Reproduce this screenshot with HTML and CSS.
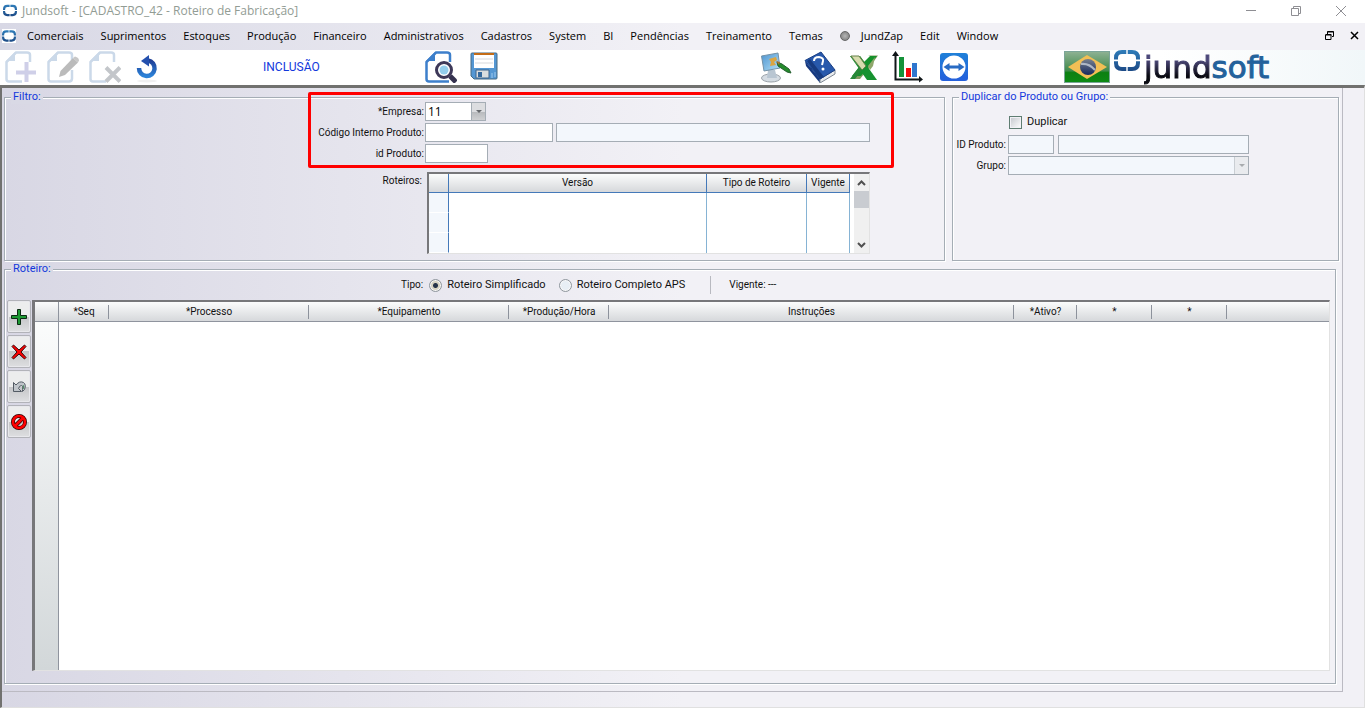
FILE: index.html
```
<!DOCTYPE html>
<html lang="pt-BR">
<head>
<meta charset="utf-8">
<meta name="viewport" content="width=device-width, initial-scale=1">
<title>Jundsoft - [CADASTRO_42 - Roteiro de Fabricação]</title>
<link rel="stylesheet" href="styles.css">
</head>
<body>
<svg class="defs" aria-hidden="true">
  <defs>
    <linearGradient id="ring" x1="0" y1="0" x2="0" y2="21" gradientUnits="userSpaceOnUse"><stop offset="0" stop-color="#2f7dba"/><stop offset="1" stop-color="#1c4a86"/></linearGradient>
    <linearGradient id="undoBlue" x1="0" y1="0" x2="0" y2="1"><stop offset="0" stop-color="#1f3f96"/><stop offset="1" stop-color="#2c82d8"/></linearGradient>
    <linearGradient id="flagGreen" x1="0" y1="0" x2="0" y2="1"><stop offset="0" stop-color="#8fb294"/><stop offset=".62" stop-color="#3f8a4a"/><stop offset=".68" stop-color="#0c8012"/><stop offset="1" stop-color="#0d8a14"/></linearGradient>
    <linearGradient id="flagBlue" x1="0" y1="0" x2="0" y2="1"><stop offset="0" stop-color="#76808e"/><stop offset="1" stop-color="#15285e"/></linearGradient>
    <linearGradient id="tv" x1="0" y1="0" x2="0" y2="1"><stop offset="0" stop-color="#1f80d8"/><stop offset="1" stop-color="#2560dc"/></linearGradient>
    <linearGradient id="screen" x1="0" y1="0" x2="1" y2="1"><stop offset="0" stop-color="#4d93cf"/><stop offset="1" stop-color="#b5e2f8"/></linearGradient>
    <symbol id="brand-mark" viewBox="0 0 26 21">
      <g fill="none" stroke="url(#ring)" stroke-width="4">
        <path d="M12.300 2H8Q2 2 2 8v1.500"/><path d="M13.700 2H18Q24 2 24 8v1.500"/>
        <path d="M2 11.200V13Q2 19 8 19h4.300"/><path d="M24 11.200V13Q24 19 18 19h-4.300"/>
      </g>
    </symbol>
    <symbol id="doc" viewBox="0 0 32 32">
      <path d="M25 11V4Q25 1.500 22 1.500H11L1.500 11V28Q1.500 30.500 4 30.500H17" fill="none" stroke="currentColor" stroke-width="2.500"/>
      <path d="M10 1L1 10H10Z" fill="currentColor"/>
    </symbol>
  </defs>
</svg>

<header class="title-bar">
  <svg class="app-icon"><use href="#brand-mark"/></svg>
  <h1 class="title">Jundsoft - [CADASTRO_42 - Roteiro de Fabricação]</h1>
  <div class="window-buttons">
    <button aria-label="Minimizar"><svg viewBox="0 0 12 12"><path d="M1 5.500h10"/></svg></button>
    <button aria-label="Restaurar"><svg viewBox="0 0 12 12"><path d="M1.500 3.500h7v7h-7zM3.500 3v-1.500h7v7H9"/></svg></button>
    <button aria-label="Fechar"><svg viewBox="0 0 12 12"><path d="M1 1l10 10M11 1L1 11"/></svg></button>
  </div>
</header>

<nav class="menu-bar">
  <svg class="app-icon app-icon-boxed"><use href="#brand-mark"/></svg>
  <div class="menu">
    <button>Comerciais</button><button>Suprimentos</button><button>Estoques</button><button>Produção</button><button>Financeiro</button><button>Administrativos</button><button>Cadastros</button><button>System</button><button>BI</button><button>Pendências</button><button>Treinamento</button><button>Temas</button><button class="with-dot"><span class="dot"></span>JundZap</button><button>Edit</button><button>Window</button>
  </div>
  <div class="child-buttons">
    <button aria-label="Restaurar janela"><svg viewBox="0 0 9 9"><path d="M1 3.500h5v5H.5v-5M.5 4h6M2.500 3V.5h6v5H7M2.500 1h6"/></svg></button>
    <button aria-label="Fechar janela"><svg viewBox="0 0 9 9"><path d="M1 1l7 7M8 1L1 8" stroke-width="1.500"/></svg></button>
  </div>
</nav>

<div class="toolbar">
  <div class="tools tools-record">
    <button aria-label="Incluir" disabled><svg class="icon pale"><use href="#doc"/><path d="M21.500 11v20M11 21.500h20" stroke="#cfcfe8" stroke-width="4"/></svg></button>
    <button aria-label="Alterar" disabled><svg class="icon pale"><use href="#doc"/><path d="M17 30.500h5q3 0 3-3V19" fill="none" stroke="currentColor" stroke-width="2.500"/><path d="M12 26l1.500-6L26 7l5 4.500L18 24z" fill="#bbb"/><path d="M26 7l2-1.500q4 1 4 4l-1 2z" fill="#c7c7c7"/></svg></button>
    <button aria-label="Excluir" disabled><svg class="icon pale"><use href="#doc"/><path d="M17 16.500l14 14M31 16.500l-14 14" stroke="#c3c6ca" stroke-width="4"/></svg></button>
    <button aria-label="Desfazer"><svg class="icon" viewBox="0 0 32 32"><ellipse cx="16" cy="30" rx="10" ry="1.500" fill="#f0f0f0"/><path d="M17 9.500a7.800 7.800 0 1 1-9 7.500" fill="none" stroke="url(#undoBlue)" stroke-width="4.500"/><path d="M18 4v11.500L10 10z" fill="#2450ae"/></svg></button>
    <span class="mode">INCLUSÃO</span>
  </div>
  <div class="tools">
    <button aria-label="Pesquisar"><svg class="icon doc-blue"><use href="#doc"/><path d="M17 30.500h7" stroke="currentColor" stroke-width="2.500"/><path d="M25 25l6 6" stroke="#35324f" stroke-width="5"/><circle cx="19" cy="19" r="7.500" fill="#fff" stroke="#3d3858" stroke-width="3"/><circle cx="19" cy="19" r="4.500" fill="#93cdec"/></svg></button>
    <button aria-label="Salvar"><svg class="icon"><path d="M4 3q0-1 1-1h24q1 0 1 1v24q0 1-1 1H7l-3-3z" fill="#5597d3" stroke="#466b84"/><path d="M7 2h20v15H7z" fill="#fff"/><path d="M7 2h20v2H7z" fill="#c46c16"/><path d="M8 8h18M8 12h18" stroke="#d7d9dc"/><path d="M9 19h13v8H9z" fill="#d9dddf" stroke="#3d648d"/><path d="M11 21h4v5h-4z" fill="#34699e"/><path d="M25 22v5M28 21v5" stroke="#a1cbed"/></svg></button>
  </div>
  <div class="tools tools-apps">
    <button aria-label="Temas"><svg class="icon"><ellipse cx="11" cy="27" rx="9.500" ry="4" fill="#d5dce3" stroke="#9aa1a8"/><path d="M8 19h7l2 8H7z" fill="#b9c6d2"/><path d="M1.500 5L18 2l2 15L4 20z" fill="url(#screen)" stroke="#7391a7"/><path d="M9 8l7-2 1 3-3 2 2 3-6 1 1-4z" fill="#dba541"/><path d="M17 11l5 2 7 5 2 4-4-1-9-6z" fill="#248b2b" stroke="#255e30"/><path d="M16 10l4 1-1 3z" fill="#ab712c"/></svg></button>
    <button aria-label="Ajuda"><svg class="icon"><path d="M1 10L16 28v4L2 15z" fill="#16387f"/><path d="M16 28l15-9v4l-15 9z" fill="#e8eaed" stroke="#7d8792"/><path d="M1 9.500L17 1l14 18-15 9z" fill="#2859ac" stroke="#183e85"/><path d="M3 10l3-2 14 18-4 2z" fill="#173b80"/><path d="M10 10q0-4 5-4 5 1 4 4l-1 4" fill="none" stroke="#fff" stroke-width="2"/><circle cx="19" cy="18" r="1.500" fill="#fff"/></svg></button>
    <button aria-label="Excel"><svg class="icon"><path d="M2 5h10l7 9 7-9h-6l2-.5h8L21 17l-9 11H4l9-12z" fill="#849c62"/><path d="M22 5h7l-9 11-7 9H4l8-10 4-4z" fill="#15912b"/><path d="M2 5h10l17 24H19z" fill="#169230"/><path d="M3 5h8l7 10-4 4z" fill="#d8dcae" stroke="#67814b"/><path d="M20 15l7-9-2 9-3 4z" fill="#8fa76b"/><path d="M2 28h5l7-9-3-3z" fill="#278737"/></svg></button>
    <button aria-label="Gráficos"><svg class="icon"><path d="M7 6h5v20H7z" fill="#149239"/><path d="M14 17h5v9h-5z" fill="#f40b0b"/><path d="M20 12h5v14h-5z" fill="#2f76ce"/><path d="M3.500 3v25.500H28" fill="none" stroke="#101619" stroke-width="2"/><path d="M0 5l3.500-5L7 5zM27 25l4 3.500-4 3z" fill="#101619"/></svg></button>
    <button aria-label="Acesso remoto"><svg class="icon"><rect x="4" y="2" width="28" height="28" rx="3" fill="url(#tv)"/><circle cx="18" cy="16" r="11.500" fill="#fff"/><path d="M7.500 16l6-4v2.500h9v-2.500l6 4-6 4v-2.500h-9v2.500z" fill="#286bc4"/></svg></button>
  </div>
  <div class="brand">
    <svg class="flag" viewBox="0 0 46 32"><rect x=".5" y=".5" width="45" height="31" fill="url(#flagGreen)" stroke="#7ba598"/><path d="M4 16L23 4l20 12-20 12z" fill="#f1bf55"/><circle cx="24" cy="16" r="8" fill="url(#flagBlue)"/><path d="M17 13q8-1 14 6" fill="none" stroke="#aeb7c5" stroke-width="2"/></svg>
    <svg class="brand-ring"><use href="#brand-mark"/></svg>
    <span class="wordmark"><span class="word-dark">jund</span><span class="word-blue">soft</span></span>
  </div>
</div>

<main class="workspace">
  <form class="sheet">
    <div class="top-groups">
      <fieldset class="group">
        <legend>Filtro:</legend>
        <div class="filter">
          <label for="empresa">*Empresa:</label>
          <span class="combo combo-small"><select id="empresa"><option>11</option></select><span class="arrow"></span></span>
          <label for="codigo">Código Interno Produto:</label>
          <span class="pair"><input class="code" id="codigo" type="text"><input class="wide" type="text" aria-label="Descrição do produto" disabled></span>
          <label for="id-produto">id Produto:</label>
          <span class="pair"><input class="id" id="id-produto" type="text"></span>
        </div>
        <div class="versions">
          <span class="versions-label" id="roteiros">Roteiros:</span>
          <div class="list">
            <table class="list-table" aria-labelledby="roteiros">
              <colgroup><col class="w-mark"><col><col class="w-type"><col class="w-current"></colgroup>
              <thead><tr><th></th><th>Versão</th><th>Tipo de Roteiro</th><th>Vigente</th></tr></thead>
              <tbody><tr><td></td><td></td><td></td><td></td></tr><tr><td></td><td></td><td></td><td></td></tr><tr><td></td><td></td><td></td><td></td></tr></tbody>
            </table>
            <div class="scroll">
              <svg viewBox="0 0 9 6"><path d="M1 5l3.500-3.500L8 5"/></svg>
              <span class="thumb"></span>
              <svg viewBox="0 0 9 6"><path d="M1 1l3.500 3.500L8 1"/></svg>
            </div>
          </div>
        </div>
        <div class="highlight"></div>
      </fieldset>

      <fieldset class="group">
        <legend class="light">Duplicar do Produto ou Grupo:</legend>
        <div class="duplicate">
          <label class="check"><input type="checkbox">Duplicar</label>
          <label for="dup-id">ID Produto:</label>
          <span class="pair pair-dup"><input id="dup-id" type="text" disabled><input type="text" aria-label="Produto" disabled></span>
          <label for="grupo">Grupo:</label>
          <span class="combo combo-off"><select id="grupo" disabled><option></option></select><span class="arrow"></span></span>
        </div>
      </fieldset>
    </div>

    <fieldset class="group route">
      <legend>Roteiro:</legend>
      <div class="route-body">
        <div class="route-options">
          <span>Tipo:</span>
          <label><input type="radio" name="tipo" checked>Roteiro Simplificado</label>
          <label><input type="radio" name="tipo">Roteiro Completo APS</label>
          <span class="current">Vigente: ---</span>
        </div>
        <div class="route-grid">
          <div class="side">
            <button type="button" aria-label="Adicionar"><svg viewBox="0 0 16 16"><path d="M6.500.5h3v6h6v3h-6v6h-3v-6h-6v-3h6z" fill="#1c9a33" stroke="#0b2b12"/></svg></button>
            <button type="button" aria-label="Remover"><svg viewBox="0 0 16 16"><path d="M2.500 1L8 6l5.500-5L15 2.500 10 8l5 5.500-1.500 1.500L8 10l-5.500 5L1 13.500 6 8 1 2.500z" fill="#f00" stroke="#34090a"/></svg></button>
            <button type="button" aria-label="Desfazer linha"><svg viewBox="0 0 16 16"><path d="M2.500 3.500v9h8l-3-3q1-3 3-3 2 1 1 4v2l2-2q2-5-1-7-4-2-7.500 2.500z" fill="#c0c5ca" stroke="#535b64"/><path d="M12 6q1.500 2 0 4" fill="none" stroke="#4b8a60"/></svg></button>
            <button type="button" aria-label="Cancelar"><svg viewBox="0 0 16 16"><circle cx="8" cy="8" r="6" fill="none" stroke="#300" stroke-width="4"/><path d="M4 12l8-8" stroke="#300" stroke-width="4"/><circle cx="8" cy="8" r="6" fill="none" stroke="#f00" stroke-width="2.500"/><path d="M4 12l8-8" stroke="#f00" stroke-width="2.500"/></svg></button>
          </div>
          <div class="steps">
            <table class="steps-table">
              <colgroup><col class="c-mark"><col class="c-seq"><col class="c-proc"><col class="c-proc"><col class="c-hour"><col class="c-instr"><col class="c-active"><col class="c-star"><col class="c-star"><col></colgroup>
              <thead><tr><th></th><th>*Seq</th><th>*Processo</th><th>*Equipamento</th><th>*Produção/Hora</th><th>Instruções</th><th>*Ativo?</th><th>*</th><th>*</th><th></th></tr></thead>
            </table>
            <div class="steps-empty"></div>
          </div>
        </div>
      </div>
    </fieldset>
  </form>
</main>
</body>
</html>
```
FILE: styles.css
```
* { box-sizing: border-box; }

body {
  margin: 0;
  min-height: 100vh;
  display: flex;
  flex-direction: column;
  background: #fff;
  color: #111;
  font: 10px/14px Roboto, "Liberation Sans", Arial, sans-serif;
}

button { font: inherit; color: inherit; border: 0; padding: 0; background: none; }
svg { display: block; }
.defs { position: absolute; width: 0; height: 0; }

/* Title bar */
.title-bar { display: flex; align-items: center; height: 23px; padding: 0 18px 2px 3px; }
.app-icon { width: 14px; height: 13px; flex: none; }
.title { flex: 1; margin: 0 0 0 5px; font: 400 12px/16px "Open Sans", "Noto Sans", sans-serif; color: #929c94; }
.window-buttons { display: flex; gap: 33px; }
.window-buttons svg { width: 12px; height: 12px; fill: none; stroke: #8e8e93; }

/* Menu bar */
.menu-bar { display: flex; align-items: center; height: 27px; padding: 0 6px 2px 2px; background: linear-gradient(90deg, #d8d8e5, #f2f1f6 50%); }
.app-icon-boxed { height: 14px; background: #fff; }
.menu { display: flex; flex: 1; gap: 17px; margin-left: 11px; font: 11px/16px "Open Sans", "Noto Sans", sans-serif; color: #000; }
.with-dot { display: flex; align-items: center; gap: 11px; }
.dot { width: 10px; height: 10px; border: 1px solid #666; border-radius: 50%; background: radial-gradient(#b5b5b5, #777); }
.child-buttons { display: flex; gap: 16px; }
.child-buttons svg { width: 9px; height: 9px; fill: none; stroke: #000; }

/* Toolbar */
.toolbar { display: grid; grid-template-columns: 425fr 335fr 304fr 301fr; height: 35px; align-items: start; background: linear-gradient(90deg, #fff 85%, #f1f7f9); }
.tools { display: flex; gap: 10px; padding-top: 1px; }
.tools-record { padding-left: 5px; }
.icon { width: 32px; height: 32px; }
.pale { color: #cbd9e9; }
.doc-blue { color: #3d7fcb; }
.mode { margin: 8px 0 0 90px; font: 12px/16px Roboto, "Liberation Sans", sans-serif; color: #1238dc; }
.tools-apps { gap: 12px; }
.brand { display: flex; gap: 4px; }
.flag { width: 46px; height: 32px; margin-top: 1px; }
.brand-ring { width: 26px; height: 21px; }
.wordmark { font: 31px/34px "DejaVu Sans", sans-serif; -webkit-text-stroke-width: 1px; }
.word-dark { color: transparent; background: linear-gradient(#4b4779 30%, #080810 75%); background-clip: text; }
.word-blue { color: #23619b; }

/* Workspace */
.workspace {
  flex: 1;
  display: flex;
  padding: 0 21px 15px 0;
  border: solid #71716f;
  border-width: 3px 1px 1px 2px;
  border-right-color: #e0e0e0;
  border-bottom-color: #e0e0e0;
  background: linear-gradient(90deg, #d8d7e4, #f2f1f6 50%);
}
.sheet { flex: 1; display: flex; flex-direction: column; padding: 2px 3px 7px 2px; border: solid #bbbac2; border-width: 0 1px 1px 0; }
.top-groups { display: grid; grid-template-columns: 941fr 387fr; gap: 7px; }
.group { position: relative; min-width: 0; margin: 0; padding: 0; border: 1px solid #a5adb5; box-shadow: 1px 1px 0 #fff, inset 1px 1px 0 #fff; }
legend { margin-left: 6px; padding: 0 2px; font: 11px/14px Roboto, "Liberation Sans", sans-serif; color: #1238dc; background: #d9d9e5; }
legend.light { background: #f2f1f6; }

input, select { font: 12px/16px "Open Sans", sans-serif; color: #000; }
input[type="text"], select { height: 19px; min-width: 0; margin: 0; padding: 0 2px; border: 1px solid #a5adb5; border-radius: 0; background: #fff; }
input[type="text"]:disabled, select:disabled { background: #f3f7fc; opacity: 1; }
select { width: 100%; display: block; appearance: none; }
.combo { position: relative; }
.combo-small { width: 61px; }
.arrow { position: absolute; top: 1px; right: 1px; bottom: 1px; width: 14px; display: grid; place-items: center; border-left: 1px solid #a5adb5; background: linear-gradient(#dcdde0 50%, #b6b8bb 50%, #cfd0d2); pointer-events: none; }
.arrow::after { content: ""; border: solid transparent; border-width: 3px 3px 0; border-top-color: #66696d; }
.combo-off .arrow { background: #e9ebee; border-color: #c9ced3; }
.combo-off .arrow::after { border-top-color: #a8abae; }

.filter { display: grid; grid-template-columns: 419px 1fr; column-gap: 1px; row-gap: 2px; margin-top: -2px; align-items: center; }
.filter > label, .duplicate > label { text-align: right; white-space: nowrap; }
.pair { display: flex; gap: 3px; }
.code { width: 128px; }
.wide { flex: 0 1 314px; }
.id { width: 63px; }

.versions { display: grid; grid-template-columns: 417px 443px; gap: 5px; margin: 9px 0 6px; }
.versions-label { text-align: right; padding-top: 2px; }
.list { display: flex; border: solid #77777a; border-width: 2px 1px 1px 2px; border-right-color: #e2e2e2; border-bottom-color: #e2e2e2; background: #fff; }
table { border-collapse: separate; border-spacing: 0; table-layout: fixed; }
th { padding: 0; font-weight: 400; }
.list-table { flex: 1; width: 0; margin-right: 4px; }
.w-mark { width: 20px; }
.w-type { width: 100px; }
.w-current { width: 43px; }
.list-table th { height: 19px; border: solid #4479b9; border-width: 0 1px 1px 0; background: linear-gradient(#fbfcfc, #d6d8db); }
.list-table td { height: 20px; padding: 0; border-right: 1px solid #86b3d4; }
.list-table td:first-child { background: #f3f7fc; border-right-color: #4479b9; border-bottom: 1px solid #fff; }
.scroll { width: 15px; display: flex; flex-direction: column; align-items: center; padding: 6px 0 5px; background: #f0f0f0; }
.scroll svg { width: 9px; height: 6px; fill: none; stroke: #505050; stroke-width: 2; }
.thumb { width: 15px; height: 17px; margin: 5px 0 auto; background: #c9ccd1; }
.highlight { position: absolute; left: 303px; right: 50px; top: -12px; height: 76px; border: 3px solid #f00; border-radius: 2px; pointer-events: none; }

.duplicate { display: grid; grid-template-columns: 53px minmax(0, 241px); column-gap: 2px; row-gap: 2px; padding-top: 9px; align-items: center; }
.duplicate .check { grid-column: 2; display: flex; align-items: center; gap: 5px; height: 18px; margin-bottom: 2px; text-align: left; font-size: 11px; }
.check input { appearance: none; width: 13px; height: 13px; margin: 0 0 0 1px; border: 1px solid #5f7d72; background: linear-gradient(135deg, #c3c6cc, #fff); box-shadow: inset 0 0 0 1px #f2f1f6; }
.pair-dup { display: grid; grid-template-columns: 46px 1fr; gap: 4px; }

/* Route steps */
.route { flex: 1; display: flex; margin: 1px 3px 0 0; }
.route-body { flex: 1; display: flex; flex-direction: column; }
.route-options { display: flex; align-items: center; padding-left: 396px; height: 18px; }
.route-options label { display: flex; align-items: center; gap: 5px; margin-left: 6px; font-size: 11px; }
.route-options label + label { margin-left: 13px; }
.route-options input { appearance: none; width: 13px; height: 13px; margin: 0; border: 1px solid #8f969d; border-radius: 50%; background: #e8eff5; box-shadow: inset 0 0 0 1px #f8f8f8; }
.route-options input:checked { background: radial-gradient(#273449 0 2px, #d8d3c0 3px); }
.current { margin-left: 25px; padding-left: 18px; line-height: 18px; border-left: 1px solid #b8b9c0; }
.route-grid { flex: 1; display: flex; gap: 1px; padding: 6px 5px 12px 2px; }
.side { display: flex; flex-direction: column; gap: 2px; }
.side button { display: grid; place-items: center; width: 24px; height: 33px; border: 1px solid #b2b3b9; border-radius: 2px; box-shadow: inset 0 0 0 1px #e8e8ec; background: linear-gradient(#eceded 50%, #c4c5c7 50%, #dedfe1); }
.side svg { width: 16px; height: 16px; }
.steps { flex: 1; min-width: 0; display: flex; flex-direction: column; border: solid #77777a; border-width: 2px 1px 1px 3px; border-right-color: #e2e2e2; border-bottom-color: #e2e2e2; background: #fff; }
.steps-table { width: 100%; }
.steps-table th { height: 20px; border-bottom: 1px solid #8f949e; background: linear-gradient(#8d929c, #8d929c) right / 1px 14px no-repeat, linear-gradient(#fbfcfc, #d6d8db); }
.steps-table th:first-child { border-right: 1px solid #8f949e; background: linear-gradient(#fbfcfc, #d6d8db); }
.steps-table th:last-child { background: linear-gradient(#fbfcfc, #d6d8db); }
.c-mark { width: 24px; }
.c-seq { width: 50px; }
.c-proc { width: 200px; }
.c-hour { width: 100px; }
.c-instr { width: 405px; }
.c-active { width: 63px; }
.c-star { width: 75px; }
.steps-empty { flex: 1; width: 24px; border-right: 1px solid #8f949e; background: linear-gradient(#fbfcfc, #d2d7d9); }
```
